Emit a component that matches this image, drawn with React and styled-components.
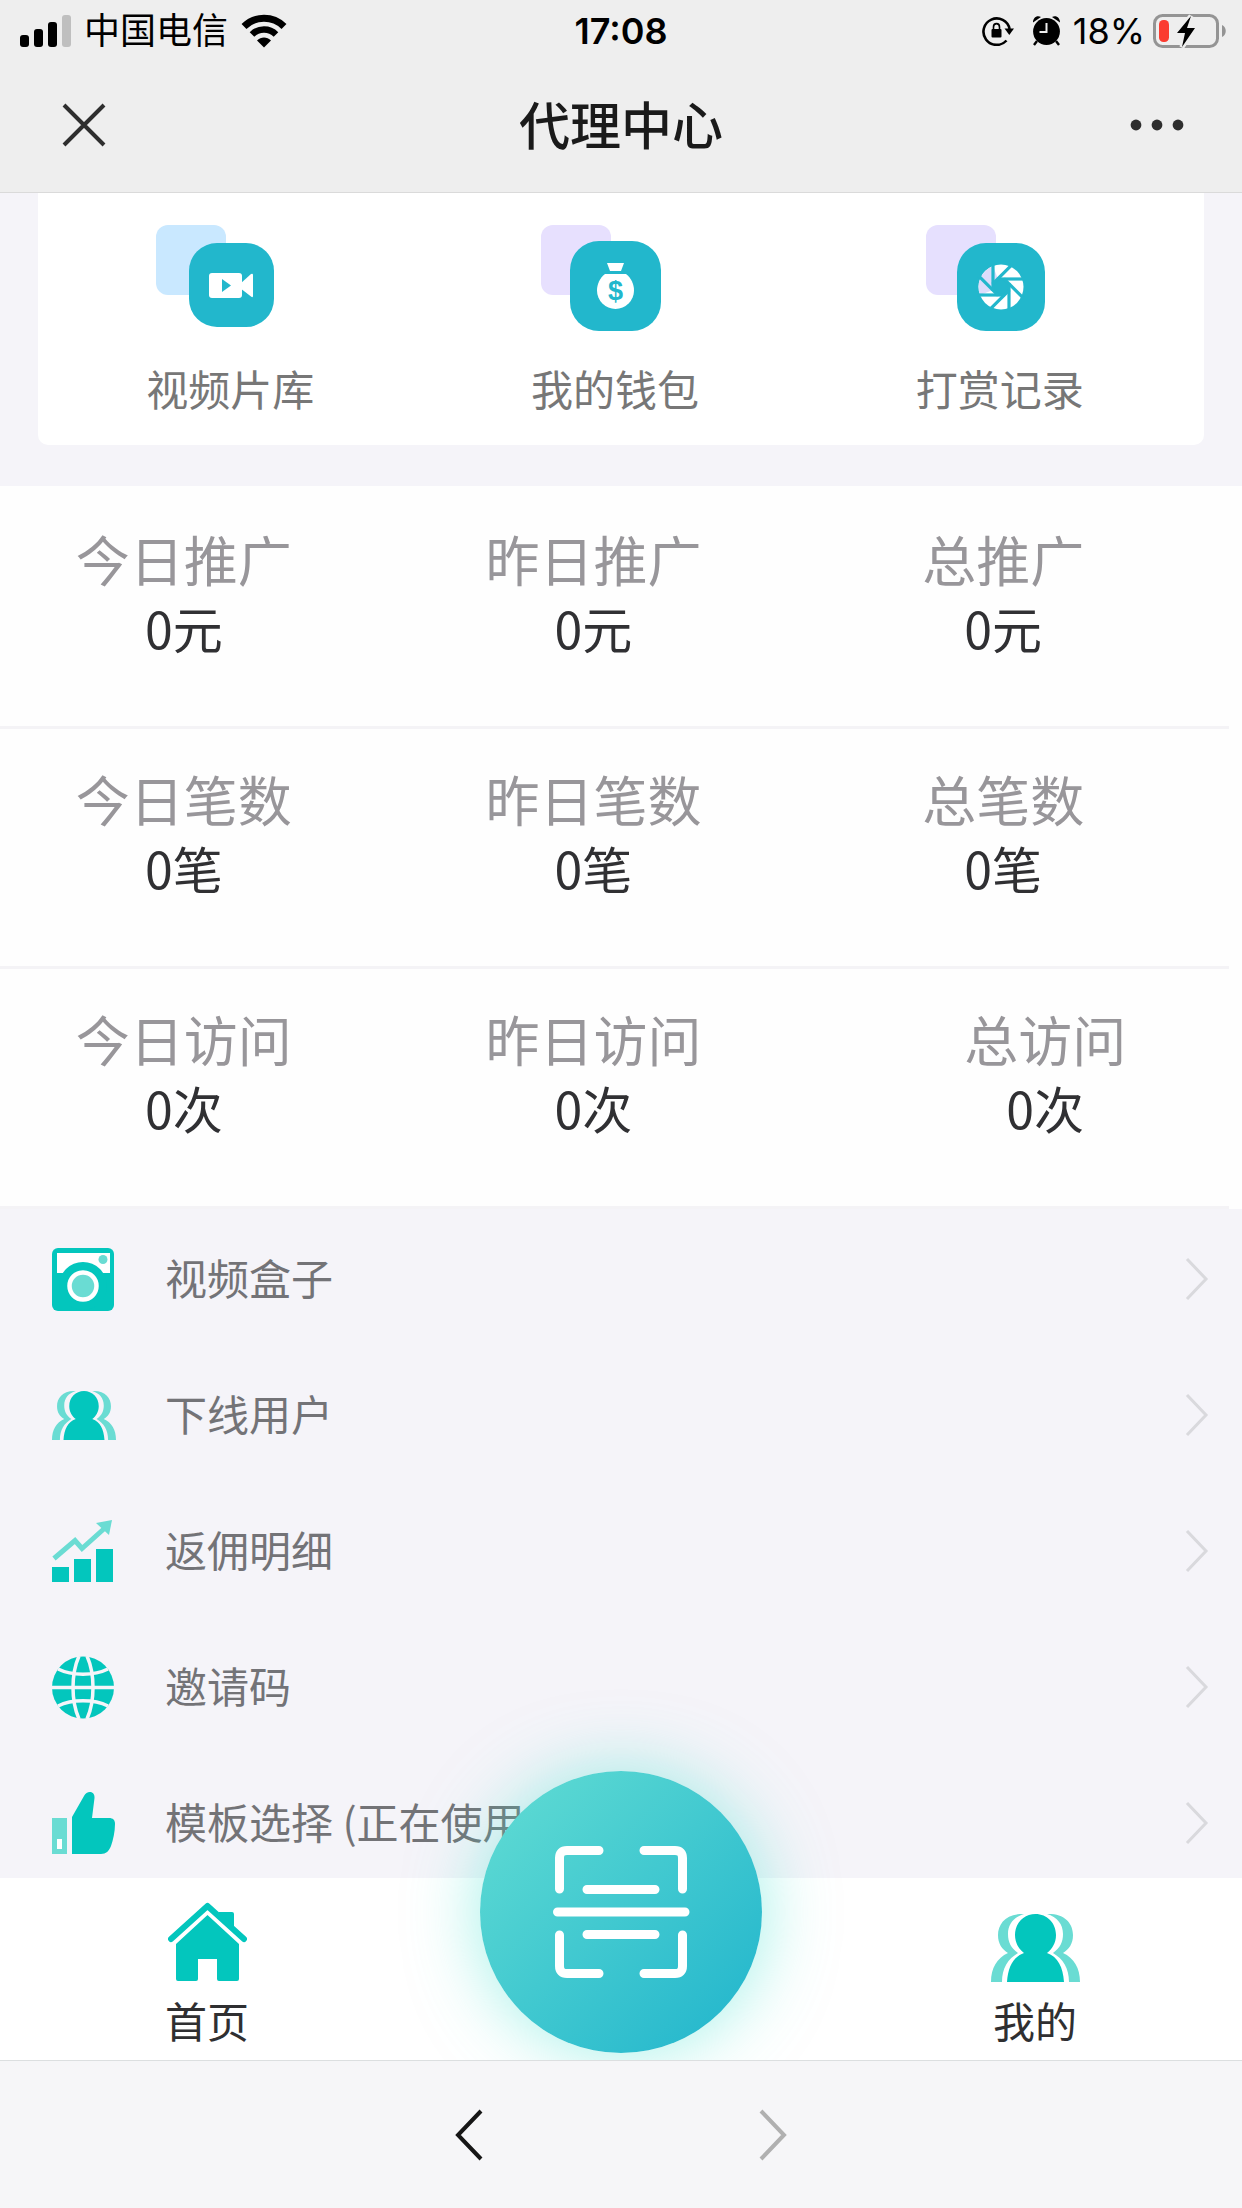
import React from 'react';
import styled, { createGlobalStyle } from 'styled-components';

const GlobalStyle = createGlobalStyle`
  * {
    box-sizing: border-box;
  }

  body {
    margin: 0;
    background: #f5f4f9;
    font-family: Inter, 'Noto Sans CJK SC', sans-serif;
  }

  button {
    border: 0;
    padding: 0;
    background: none;
    font: inherit;
    color: inherit;
    cursor: pointer;
  }

  a {
    color: inherit;
    text-decoration: none;
  }

  svg {
    display: block;
    flex: none;
  }
`;

const Page = styled.div`
  display: flex;
  flex-direction: column;
  height: 100vh;
  overflow: hidden;
`;

const TopBar = styled.header`
  flex: none;
  background: #eeeeee;
  border-bottom: 1px solid #dadada;
`;

const StatusBar = styled.div`
  display: grid;
  grid-template-columns: 1fr auto 1fr;
  align-items: center;
  height: 62px;
  padding: 0 16px;
  font-size: 36px;
  line-height: 40px;
  color: #000;
`;

const StatusGroup = styled.div`
  display: flex;
  align-items: center;
  justify-content: ${props => props.$end ? 'flex-end' : 'flex-start'};
  gap: ${props => props.$end ? '8px' : '13px'};
  padding-left: 4px;
`;

const StatusIcons = styled.div`
  display: flex;
  gap: 18px;
  margin-right: 4px;
`;

const Clock = styled.time`
  font-weight: 600;
`;

const TitleBar = styled.div`
  display: grid;
  grid-template-columns: 1fr auto 1fr;
  align-items: center;
  height: 130px;
  padding: 0 58px 4px;
`;

const Title = styled.h1`
  margin: 0;
  padding-bottom: 4px;
  font-family: 'Noto Sans CJK SC', sans-serif;
  font-size: 51px;
  line-height: 70px;
  font-weight: 500;
  color: #1a1a1a;
`;

const IconButton = styled.button`
  justify-self: ${props => props.$end ? 'end' : 'start'};
  padding-left: 4px;
`;

const Content = styled.main`
  flex: 1;
  min-height: 0;
  overflow: hidden;
  font-family: 'Noto Sans CJK SC', sans-serif;
`;

const ShortcutCard = styled.nav`
  display: grid;
  grid-template-columns: repeat(3, 1fr);
  margin: 0 38px 41px;
  padding: 32px 12px 27px 0;
  border-radius: 0 0 10px 10px;
  background: #fff;
`;

const Shortcut = styled.a`
  display: flex;
  flex-direction: column;
  align-items: center;
  gap: 23px;
  font-size: 42px;
  line-height: 60px;
  color: #777;
`;

const Stats = styled.section`
  padding: 3px 13px 0 0;
  background: #fefefe;
`;

const StatRow = styled.dl`
  display: grid;
  grid-template-columns: repeat(3, 1fr);
  margin: 0;
  padding: 36px 0 65px;
  border-bottom: 3px solid #f4f3f6;
`;

const Stat = styled.div`
  padding: ${props => props.$shifted ? '0 0 0 42px' : '0 42px 0 0'};
  text-align: center;
  line-height: 68px;
`;

const StatLabel = styled.dt`
  font-size: 54px;
  color: #98969a;
`;

const StatValue = styled.dd`
  margin: 0;
  font-size: 50px;
  color: #303033;
`;

const Menu = styled.ul`
  margin: 0;
  padding: 2px 0 0;
  list-style: none;
`;

const MenuLink = styled.a`
  display: flex;
  align-items: center;
  height: 136px;
  padding: 0 33px 0 52px;
  font-size: 42px;
  line-height: 60px;
  color: #737377;
`;

const MenuIcon = styled.span`
  display: flex;
  width: 113px;
`;

const MenuText = styled.span`
  flex: 1;
  padding-bottom: 4px;
`;

const TabBar = styled.nav`
  display: grid;
  grid-template-columns: repeat(3, 1fr);
  align-items: end;
  flex: none;
  position: relative;
  background: #fff;
  font-family: 'Noto Sans CJK SC', sans-serif;
`;

const Tab = styled.a`
  display: flex;
  flex-direction: column;
  align-items: center;
  gap: 8px;
  padding: 24px 0 10px;
  font-size: 42px;
  line-height: 60px;
  color: #2f2f31;
`;

/* the round button rises above the bar by its negative margin */
const ScanButton = styled.button`
  display: flex;
  align-items: center;
  justify-content: center;
  justify-self: center;
  width: 282px;
  height: 282px;
  margin: -107px 0 7px;
  border-radius: 50%;
  background: linear-gradient(135deg, #5fdbd3 5%, #26b8cd 90%);
  box-shadow: 0 0 70px rgba(70, 228, 210, 0.5);
`;

const BrowserBar = styled.footer`
  display: flex;
  align-items: center;
  justify-content: center;
  gap: 276px;
  flex: none;
  position: relative;
  height: 148px;
  background: #f6f6f8;
  border-top: 1px solid #dcdfe0;
`;

const teal = '#03c6bd';
const lightTeal = '#6adcd3';
const tileTeal = '#22b7cc';

const SignalIcon = () => (
  <svg width="51" height="32" viewBox="0 0 51 32">
    <rect y="20" width="9" height="12" rx="3" />
    <rect x="14" y="14" width="9" height="18" rx="3" />
    <rect x="28" y="7" width="9" height="25" rx="3" />
    <rect x="42" width="9" height="32" rx="3" fill="#bfbfbf" />
  </svg>
);

const WifiIcon = () => (
  <svg width="46" height="34" viewBox="0 0 46 34">
    <path d="M3 12.5 A28.5 28.5 0 0 1 43 12.5" fill="none" stroke="#000" strokeWidth="7" />
    <path d="M11 20.5 A17 17 0 0 1 35 20.5" fill="none" stroke="#000" strokeWidth="6.5" />
    <path d="M16 26.5 C20 22.5 26 22.5 30 26.5 L23 33.5 Z" />
  </svg>
);

const RotationLockIcon = () => (
  <svg width="32" height="30" viewBox="0 0 32 30">
    <path d="M24.5 24.5 A13.2 13.2 0 1 1 27.6 13" fill="none" stroke="#000" strokeWidth="2.6" />
    <path d="M22.5 12.5 H32 L27.3 19 Z" />
    <rect x="9.5" y="13" width="10" height="8.5" rx="1" />
    <path d="M11.5 14 V11 a3 3.4 0 0 1 6 0 V14" fill="none" stroke="#000" strokeWidth="1.6" />
  </svg>
);

const AlarmIcon = () => (
  <svg width="29" height="30" viewBox="0 0 29 30">
    <circle cx="14.5" cy="15.5" r="13.4" />
    <path d="M1 6.5 C1 2 4.5 -1 9 1 Z M28 6.5 C28 2 24.5 -1 20 1 Z" />
    <path d="M5 25 L2 29 M24 25 L27 29" stroke="#000" strokeWidth="2.4" />
    <path d="M14.5 7 V16 H7.5" fill="none" stroke="#eee" strokeWidth="2" />
  </svg>
);

const BatteryIcon = () => (
  <svg width="73" height="36" viewBox="0 0 73 36">
    <rect x="1.5" y="2.5" width="63" height="31" rx="8" fill="none" stroke="#949494" strokeWidth="3" />
    <path d="M69 12 C74 14 74 22 69 24 Z" fill="#949494" />
    <rect x="6" y="7" width="10" height="22" rx="4.5" fill="#fb3b30" />
    <path d="M38 3 L24 20 H32 L29 34 L42 15 H34 Z" stroke="#eee" strokeWidth="5" />
    <path d="M38 3 L24 20 H32 L29 34 L42 15 H34 Z" />
  </svg>
);

const CloseIcon = () => (
  <svg width="44" height="44" viewBox="0 0 44 44">
    <path d="M2 2 L42 42 M42 2 L2 42" stroke="#2e2e2e" strokeWidth="4" />
  </svg>
);

const MoreIcon = () => (
  <svg width="54" height="12" viewBox="0 0 54 12" fill="#2e2e2e">
    <circle cx="6" cy="6" r="5.4" />
    <circle cx="27" cy="6" r="5.4" />
    <circle cx="48" cy="6" r="5.4" />
  </svg>
);

const VideoTile = () => (
  <svg width="148" height="110" viewBox="0 0 148 110">
    <rect width="70" height="70" rx="12" fill="#c9e8ff" />
    <rect x="33" y="18" width="85" height="84" rx="28" fill={tileTeal} />
    <rect x="53" y="48" width="33" height="25" rx="3" fill="#fff" />
    <path d="M84 59 L95 49 Q97 48 97 50 V71 Q97 73 95 71.5 L84 63 Z" fill="#fff" />
    <path d="M66 54 L75 60.5 L66 67 Z" fill={tileTeal} />
  </svg>
);

const WalletTile = () => (
  <svg width="148" height="110" viewBox="0 0 148 110">
    <rect width="70" height="70" rx="12" fill="#e7e0fe" />
    <rect x="29" y="16" width="91" height="90" rx="29" fill={tileTeal} />
    <path d="M66 38 H83 L80 46 H69 Z" fill="#fff" />
    <path d="M64 49 H85 C90 53 93 59 93 65.5 A18.5 18.5 0 0 1 56 65.5 C56 59 59 53 64 49 Z" fill="#fff" />
    <text x="74.5" y="75" textAnchor="middle" fontFamily="Liberation Sans" fontWeight="700" fontSize="27" fill={tileTeal}>
      $
    </text>
  </svg>
);

const ApertureTile = () => (
  <svg width="148" height="110" viewBox="0 0 148 110">
    <rect width="70" height="70" rx="12" fill="#e6e0fe" />
    <rect x="31" y="18" width="88" height="88" rx="29" fill={tileTeal} />
    <g transform="translate(75 62)">
      <circle r="22.5" fill="#fff" />
      <path d="M0 0 L-21 8 A22.5 22.5 0 0 1 -8 -21 Z" fill="#dcdcfb" />
      <circle r="8.5" fill={tileTeal} />
      {[0, 45, 90, 135, 180, 225, 270, 315].map(angle => (
        <path key={angle} d="M-4 -8 H24" stroke={tileTeal} strokeWidth="3.2" transform={`rotate(${angle})`} />
      ))}
    </g>
  </svg>
);

const BoxIcon = () => (
  <svg width="62" height="63" viewBox="0 0 62 63">
    <rect width="62" height="63" rx="6" fill={teal} />
    <path d="M5 5 H58 V25 H5 Z" fill="#fff" />
    <circle cx="31" cy="38" r="24" fill={teal} />
    <circle cx="31" cy="38" r="13.5" fill={lightTeal} stroke="#fff" strokeWidth="4.5" />
    <circle cx="51" cy="11.5" r="4.5" fill={lightTeal} />
  </svg>
);

const backFigure =
  'M33 0 C15 -1 7 10 7 21 C7 30 11 35 17 39 C6 44 0 54 0 68 H11 C11 54 17 45 27 39 C20 34 17 28 17 20 C17 10 23 3 33 0 Z';

const UsersIcon = ({ width, height }) => (
  <svg width={width} height={height} viewBox="0 0 89 68">
    <path d={backFigure} fill={lightTeal} />
    <path d={backFigure} fill={lightTeal} transform="translate(89) scale(-1 1)" />
    <path
      d="M44.5 0 C56 0 65 9 65 21 C65 29 61 35 56 39 C67 43 72 53 73 68 H16 C17 53 22 43 33 39 C28 35 24 29 24 21 C24 9 33 0 44.5 0 Z"
      fill={teal}
    />
  </svg>
);

const ChartIcon = () => (
  <svg width="62" height="62" viewBox="0 0 62 62">
    <path d="M0 47 H17 V62 H0 Z M22 39 H39 V62 H22 Z M44 29 H61 V62 H44 Z" fill={teal} />
    <path d="M2 38.5 L23 20.5 L30 28.5 L54 7" fill="none" stroke={lightTeal} strokeWidth="5" />
    <path d="M44 3 L60 0 L57 15 Z" fill={lightTeal} />
  </svg>
);

const GlobeIcon = () => (
  <svg width="62" height="63" viewBox="0 0 62 63">
    <circle cx="31" cy="31.5" r="31" fill={teal} />
    <g fill="none" stroke="#f5f5f9" strokeWidth="3.5">
      <path d="M0 31.5 H62" />
      <path d="M27 0 C19 18 19 45 27 63 M35 0 C43 18 43 45 35 63" />
      <path d="M6 13 C20 20 42 20 56 13 M6 50 C20 43 42 43 56 50" />
    </g>
  </svg>
);

const ThumbIcon = () => (
  <svg width="63" height="62" viewBox="0 0 63 62">
    <path d="M0 26 H15 V62 H0 Z" fill={lightTeal} />
    <path d="M5 47 H10 V57 H5 Z" fill="#fff" />
    <path
      d="M20 62 V25 L32 4 C35 -2 43 -1 42.5 6 L40 26 H57 C61 26 63 28 63 32 C63 40 61 48 59 54 C57 59 54 62 49 62 Z"
      fill={teal}
    />
  </svg>
);

const HomeIcon = () => (
  <svg width="79" height="80" viewBox="0 0 79 80">
    <path d="M51 10 H64 Q66 10 66 12 V30 L51 16 Z" fill={teal} />
    <path d="M3 37 L39.5 4 L76 37" fill="none" stroke={teal} strokeWidth="6" strokeLinecap="round" strokeLinejoin="round" />
    <path d="M39.5 13 L71 42 V77 Q71 79 69 79 H51 Q49 79 49 77 V57 H30 V77 Q30 79 28 79 H10 Q8 79 8 77 V42 Z" fill={teal} />
  </svg>
);

const ScanIcon = () => (
  <svg width="137" height="132" viewBox="0 0 137 132" fill="none" stroke="#fff" strokeWidth="9" strokeLinecap="round">
    <path d="M6.5 43 V12 Q6.5 4.5 14 4.5 H46" />
    <path d="M91 4.5 H122 Q129.5 4.5 129.5 12 V43" />
    <path d="M129.5 89 V120 Q129.5 127.5 122 127.5 H91" />
    <path d="M46 127.5 H14 Q6.5 127.5 6.5 120 V89" />
    <path d="M34 43.5 H102 M4.5 66 H132 M34 88.5 H102" />
  </svg>
);

const Chevron = ({ width, height, color, stroke, left }) => (
  <svg width={width} height={height} viewBox={`0 0 ${width} ${height}`} fill="none" stroke={color} strokeWidth={stroke}>
    <path
      d={
        left
          ? `M${width - 2} 2 L3 ${height / 2} L${width - 2} ${height - 2}`
          : `M2 2 L${width - 3} ${height / 2} L2 ${height - 2}`
      }
    />
  </svg>
);

const shortcuts = [
  { label: '视频片库', icon: <VideoTile /> },
  { label: '我的钱包', icon: <WalletTile /> },
  { label: '打赏记录', icon: <ApertureTile /> },
];

const stats = [
  [
    { label: '今日推广', value: '0元' },
    { label: '昨日推广', value: '0元' },
    { label: '总推广', value: '0元' },
  ],
  [
    { label: '今日笔数', value: '0笔' },
    { label: '昨日笔数', value: '0笔' },
    { label: '总笔数', value: '0笔' },
  ],
  [
    { label: '今日访问', value: '0次' },
    { label: '昨日访问', value: '0次' },
    { label: '总访问', value: '0次', shifted: true },
  ],
];

const menu = [
  { label: '视频盒子', icon: <BoxIcon /> },
  { label: '下线用户', icon: <UsersIcon width={64} height={49} /> },
  { label: '返佣明细', icon: <ChartIcon /> },
  { label: '邀请码', icon: <GlobeIcon /> },
  { label: '模板选择 (正在使用', icon: <ThumbIcon /> },
];

export default function App() {
  return (
    <Page>
      <GlobalStyle />
      <TopBar>
        <StatusBar>
          <StatusGroup>
            <SignalIcon />
            <span>中国电信</span>
            <WifiIcon />
          </StatusGroup>
          <Clock>17:08</Clock>
          <StatusGroup $end>
            <StatusIcons>
              <RotationLockIcon />
              <AlarmIcon />
            </StatusIcons>
            <span>18%</span>
            <BatteryIcon />
          </StatusGroup>
        </StatusBar>
        <TitleBar>
          <IconButton aria-label="关闭">
            <CloseIcon />
          </IconButton>
          <Title>代理中心</Title>
          <IconButton $end aria-label="更多">
            <MoreIcon />
          </IconButton>
        </TitleBar>
      </TopBar>

      <Content>
        <ShortcutCard>
          {shortcuts.map(item => (
            <Shortcut href="#" key={item.label}>
              {item.icon}
              {item.label}
            </Shortcut>
          ))}
        </ShortcutCard>

        <Stats>
          {stats.map((row, index) => (
            <StatRow key={index}>
              {row.map(stat => (
                <Stat key={stat.label} $shifted={stat.shifted}>
                  <StatLabel>{stat.label}</StatLabel>
                  <StatValue>{stat.value}</StatValue>
                </Stat>
              ))}
            </StatRow>
          ))}
        </Stats>

        <Menu>
          {menu.map(item => (
            <li key={item.label}>
              <MenuLink href="#">
                <MenuIcon>{item.icon}</MenuIcon>
                <MenuText>{item.label}</MenuText>
                <Chevron width={24} height={44} color="#d9d9dd" stroke={3} />
              </MenuLink>
            </li>
          ))}
        </Menu>
      </Content>

      <TabBar>
        <Tab href="#">
          <HomeIcon />
          首页
        </Tab>
        <ScanButton aria-label="扫一扫">
          <ScanIcon />
        </ScanButton>
        <Tab href="#">
          <UsersIcon width={89} height={68} />
          我的
        </Tab>
      </TabBar>

      <BrowserBar>
        <button aria-label="后退">
          <Chevron left width={28} height={52} color="#161616" stroke={4} />
        </button>
        <button aria-label="前进">
          <Chevron width={28} height={52} color="#b0b0b0" stroke={4} />
        </button>
      </BrowserBar>
    </Page>
  );
}
